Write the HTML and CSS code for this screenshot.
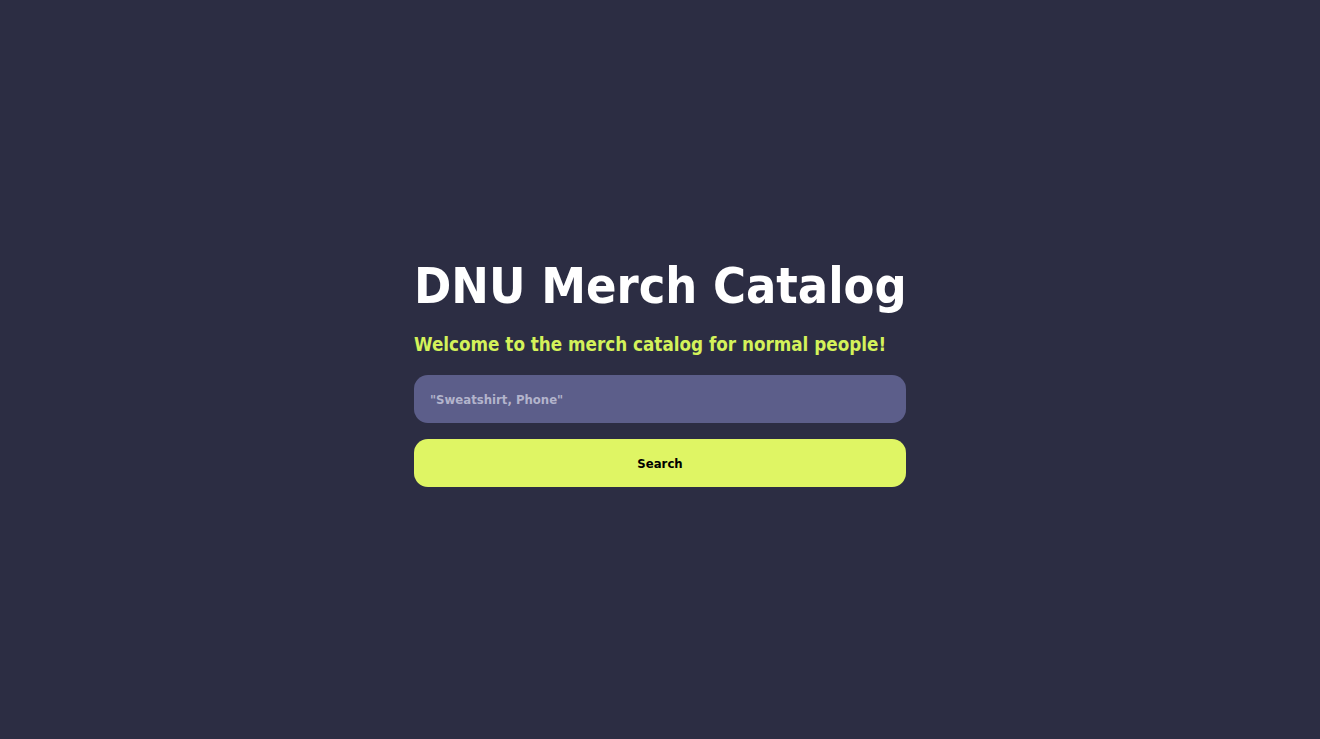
FILE: index.html
```html
<!DOCTYPE html>
<html lang="en">
<head>
<meta charset="utf-8">
<title>DNU Merch Catalog</title>
<link rel="stylesheet" href="styles.css">
</head>
<body>
<main class="page">
  <section class="catalog">
    <h1 class="title">DNU Merch Catalog</h1>
    <h2 class="subtitle">Welcome to the merch catalog for normal people!</h2>
    <input class="search-input" type="text" placeholder="&quot;Sweatshirt, Phone&quot;">
    <button class="search-button" type="button">Search</button>
  </section>
</main>
</body>
</html>
```
FILE: styles.css
```css
* { box-sizing: border-box; }
html, body {
  margin: 0;
  padding: 0;
  background: #2c2d43;
}
body {
  font-family: "DejaVu Sans Condensed", "DejaVu Sans", Tahoma, sans-serif;
  font-weight: bold;
}
.page {
  height: 100vh;
  display: flex;
  align-items: center;
  justify-content: center;
}
.catalog {
  width: 492px;
  display: flex;
  flex-direction: column;
}
.title {
  margin: 0 0 13px;
  color: #ffffff;
  font-size: 50px;
  line-height: 68px;
  font-weight: bold;
  white-space: nowrap;
}
.subtitle {
  margin: 0 0 18px;
  color: #d4f25a;
  font-size: 18.7px;
  line-height: 24px;
  font-weight: bold;
  white-space: nowrap;
}
.search-input {
  height: 48px;
  border: none;
  border-radius: 14px;
  background: #5c5e8a;
  padding: 0 16px;
  font-family: inherit;
  font-weight: bold;
  font-size: 13px;
  color: #ffffff;
  outline: none;
  margin-bottom: 16px;
}
.search-input::placeholder {
  color: #b3b4cc;
}
.search-button {
  height: 48px;
  border: none;
  border-radius: 14px;
  background: #dff564;
  color: #000000;
  font-family: inherit;
  font-weight: bold;
  font-size: 13px;
  cursor: pointer;
}
```
